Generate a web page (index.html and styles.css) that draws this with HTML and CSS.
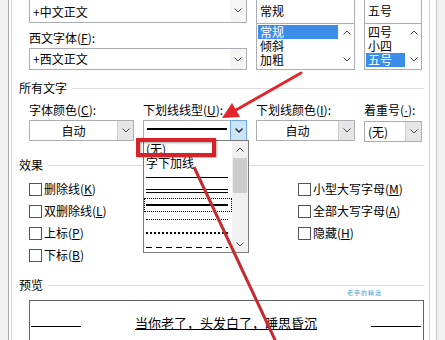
FILE: index.html
```html
<!DOCTYPE html>
<html lang="zh-CN">
<head>
    <meta charset="UTF-8">
    <meta name="viewport" content="width=device-width, initial-scale=1.0">
    <title>字体</title>
    <link rel="stylesheet" href="styles.css">
</head>
<body>
  <div class="window">
    <div class="pane">

      <div class="font-row">
        <div class="col w-font">
          <div class="combo combo-tall">
            <span class="combo-text">+中文正文</span>
            <span class="drop plain"><svg width="8" height="5" viewBox="0 0 8 5"><path d="M0.5 0.5 L4 4 L7.5 0.5" fill="none" stroke="#444"/></svg></span>
          </div>
          <div class="field-label top-label">西文字体(<u>F</u>):</div>
          <div class="combo">
            <span class="combo-text">+西文正文</span>
            <span class="drop plain"><svg width="8" height="5" viewBox="0 0 8 5"><path d="M0.5 0.5 L4 4 L7.5 0.5" fill="none" stroke="#444"/></svg></span>
          </div>
        </div>
        <div class="col w-style">
          <div class="textbox">常规</div>
          <div class="listbox">
            <ul class="items">
              <li class="sel">常规</li>
              <li>倾斜</li>
              <li>加粗</li>
            </ul>
            <div class="vscroll">
              <svg width="8" height="5" viewBox="0 0 8 5"><path d="M0.5 4.5 L4 1 L7.5 4.5" fill="none" stroke="#444"/></svg>
              <svg width="8" height="5" viewBox="0 0 8 5"><path d="M0.5 0.5 L4 4 L7.5 0.5" fill="none" stroke="#444"/></svg>
            </div>
          </div>
        </div>
        <div class="col w-size">
          <div class="textbox">五号</div>
          <div class="listbox">
            <ul class="items">
              <li>四号</li>
              <li>小四</li>
              <li class="sel">五号</li>
            </ul>
            <div class="vscroll">
              <svg width="8" height="5" viewBox="0 0 8 5"><path d="M0.5 4.5 L4 1 L7.5 4.5" fill="none" stroke="#444"/></svg>
              <svg width="8" height="5" viewBox="0 0 8 5"><path d="M0.5 0.5 L4 4 L7.5 0.5" fill="none" stroke="#444"/></svg>
            </div>
          </div>
        </div>
      </div>

      <div class="group-title">所有文字</div>
      <div class="attr-row">
        <div class="col w-color">
          <div class="field-label">字体颜色(<u>C</u>):</div>
          <div class="combo combo-sm">
            <span class="combo-text center">自动</span>
            <span class="drop"><svg width="8" height="5" viewBox="0 0 8 5"><path d="M0.5 0.5 L4 4 L7.5 0.5" fill="none" stroke="#444"/></svg></span>
          </div>
        </div>
        <div class="col w-uline">
          <div class="field-label">下划线线型(<u>U</u>):</div>
          <div class="combo combo-sm">
            <span class="combo-text"><span class="sample"></span></span>
            <span class="drop hot"><svg width="8" height="5" viewBox="0 0 8 5"><path d="M0.5 0.5 L4 4 L7.5 0.5" fill="none" stroke="#222" stroke-width="1.3"/></svg></span>
            <div class="ddlist">
              <div class="opts">
                <div class="opt">(无)</div>
                <div class="opt">字下加线</div>
                <div class="opt"><span class="ln ln-single"></span></div>
                <div class="opt"><span class="ln ln-double"></span></div>
                <div class="opt focus"><span class="ln ln-thick"></span></div>
                <div class="opt"><span class="ln ln-dot"></span></div>
                <div class="opt"><span class="ln ln-dot-heavy"></span></div>
                <div class="opt"><span class="ln ln-dash"></span></div>
              </div>
              <div class="ddscroll">
                <span class="sb-btn"><svg width="8" height="5" viewBox="0 0 8 5"><path d="M0.5 4.5 L4 1 L7.5 4.5" fill="none" stroke="#444"/></svg></span>
                <span class="thumb"></span>
                <span class="sb-btn bottom"><svg width="8" height="5" viewBox="0 0 8 5"><path d="M0.5 0.5 L4 4 L7.5 0.5" fill="none" stroke="#444"/></svg></span>
              </div>
            </div>
          </div>
        </div>
        <div class="col w-ucolor">
          <div class="field-label">下划线颜色(<u>I</u>):</div>
          <div class="combo combo-sm">
            <span class="combo-text center">自动</span>
            <span class="drop"><svg width="8" height="5" viewBox="0 0 8 5"><path d="M0.5 0.5 L4 4 L7.5 0.5" fill="none" stroke="#444"/></svg></span>
          </div>
        </div>
        <div class="col w-emph">
          <div class="field-label">着重号(<u class="latin">·</u>):</div>
          <div class="combo combo-sm">
            <span class="combo-text">(无)</span>
            <span class="drop"><svg width="8" height="5" viewBox="0 0 8 5"><path d="M0.5 0.5 L4 4 L7.5 0.5" fill="none" stroke="#444"/></svg></span>
          </div>
        </div>
      </div>

      <div class="group-title fx-title">效果</div>
      <div class="effects">
        <div class="fx-col left">
          <label class="check"><span class="box"></span>删除线(<u>K</u>)</label>
          <label class="check"><span class="box"></span>双删除线(<u>L</u>)</label>
          <label class="check"><span class="box"></span>上标(<u>P</u>)</label>
          <label class="check"><span class="box"></span>下标(<u>B</u>)</label>
        </div>
        <div class="fx-col">
          <label class="check"><span class="box"></span>小型大写字母(<u>M</u>)</label>
          <label class="check"><span class="box"></span>全部大写字母(<u>A</u>)</label>
          <label class="check"><span class="box"></span>隐藏(<u>H</u>)</label>
        </div>
      </div>

      <div class="group-title pv-title">预览<span class="watermark">老手的精选</span></div>
      <div class="preview">
        <span class="pv-line"></span>
        <span class="pv-text">当你老了，头发白了，睡思昏沉</span>
        <span class="pv-line"></span>
      </div>

    </div>
  </div>

  <!-- 标注：红框和箭头 -->
  <svg class="marks" width="445" height="340" viewBox="0 0 445 340">
    <defs>
      <filter id="sh" x="-20%" y="-20%" width="140%" height="140%">
        <feDropShadow dx="1" dy="1" stdDeviation="1" flood-color="#000" flood-opacity="0.35"/>
      </filter>
    </defs>
    <rect x="138" y="140" width="76" height="15" fill="none" stroke="#d8232a" stroke-width="4" filter="url(#sh)"/>
    <line x1="301" y1="73" x2="236" y2="110" stroke="#e3262b" stroke-width="3" stroke-linecap="round"/>
    <polygon points="222,118 240,117 232,103" fill="#e3262b"/>
    <line x1="194" y1="167" x2="276" y2="342" stroke="#c42a2e" stroke-width="3"/>
  </svg>
</body>
</html>
```

FILE: styles.css
```css
*{margin:0;padding:0;box-sizing:border-box;}
body{background:#f0f0f0;font:12px/16px "Noto Sans CJK SC","Noto Sans",sans-serif;color:#000;position:relative;height:340px;overflow:hidden;}
u{text-decoration:underline;}
.latin{font-family:"Liberation Sans",sans-serif;}
ul{list-style:none;}

/* window frame */
.window{margin:-3px 0 0 8px;width:429px;height:420px;background:#fff;border-left:1px solid #a9a9a9;border-right:1px solid #c6c6c6;padding:0 6px 0 2px;}
.pane{height:100%;border-left:1px solid #d6d6d6;border-right:1px solid #cfcfcf;}

.col{display:flex;flex-direction:column;}

/* top font row */
.font-row{display:flex;gap:9px;padding-left:17px;}
.w-font{width:218px;}
.w-style{width:99px;}
.w-size{width:58px;}

.combo{height:22px;border:1px solid #abadb3;display:flex;background:#fff;position:relative;}
.combo-tall{height:26px;}
.combo-sm{height:21px;}
.combo-text{flex:1;padding-left:3px;display:flex;align-items:center;white-space:nowrap;}
.combo-tall .combo-text{padding-top:4px;}
.combo-text.center{justify-content:center;padding-left:0;}
.drop{width:16px;display:flex;align-items:center;justify-content:center;background:#e6e6e6;border-left:1px solid #cfcfcf;}
.drop.plain{background:#f5f5f5;border-left:0;}
.drop.hot{background:#cce4f7;border:1px solid #6aa7e3;margin:-1px -1px -1px 0;width:17px;}

.field-label{white-space:nowrap;margin-bottom:2px;}
.top-label{margin-top:7px;}

.textbox{height:27px;border:1px solid #abadb3;padding:5px 0 0 3px;}
.listbox{height:46px;border:1px solid #abadb3;border-top:0;display:flex;}
.items{flex:1;padding:1px 1px 0;}
.items li{height:14px;line-height:14px;padding-left:2px;}
.items li.sel{background:#3b8de8;color:#fff;}
.vscroll{width:15px;display:flex;flex-direction:column;justify-content:space-between;align-items:center;padding:6px 0 7px;}

/* section titles */
.group-title{display:flex;align-items:center;padding:0 5px 0 7px;margin-top:10px;position:relative;}
.group-title::after{content:'';flex:1;border-top:1px solid #dcdcdc;margin-left:5px;}
.fx-title{margin-top:15px;}
.pv-title{margin-top:12px;}
.watermark{position:absolute;left:335px;top:13px;font-size:6px;line-height:6px;letter-spacing:1px;color:#4a9fd8;}

/* attribute row */
.attr-row{display:flex;gap:9px;padding-left:17px;margin-top:6px;}
.w-color{width:105px;}
.w-uline{width:104px;}
.w-ucolor{width:99px;}
.w-emph{width:58px;}
.sample{flex:1;height:2px;background:#000;margin:-3px 3px 0 0;}

/* open dropdown */
.ddlist{position:absolute;top:19px;left:-1px;width:106px;height:113px;border:1px solid #7a7a7a;background:#fff;display:flex;z-index:2;}
.opts{flex:1;padding-top:1px;}
.opt{height:14px;line-height:14px;display:flex;align-items:center;padding:0 2px 0 2px;white-space:nowrap;}
.opt.focus{outline:1px dotted #000;outline-offset:-1px;}
.ln{display:block;width:82px;}
.ln-single{border-top:1px solid #000;}
.ln-double{height:4px;border-top:1px solid #000;border-bottom:1px solid #000;}
.ln-thick{border-top:2px solid #000;}
.ln-dot{border-top:1px dotted #000;}
.ln-dot-heavy{border-top:2px dotted #000;}
.ln-dash{height:1px;background:repeating-linear-gradient(90deg,#000 0 6px,transparent 6px 10px);}
.ddscroll{width:16px;background:#f0f0f0;display:flex;flex-direction:column;}
.sb-btn{height:16px;display:flex;align-items:center;justify-content:center;}
.sb-btn.bottom{margin-top:auto;}
.thumb{height:35px;margin:1px 1px 0;background:#cdcdcd;}

/* effects */
.effects{display:flex;padding-left:17px;margin-top:6px;}
.fx-col{display:flex;flex-direction:column;gap:2px;}
.fx-col.left{width:269px;}
.check{display:flex;align-items:center;height:20px;white-space:nowrap;}
.box{width:13px;height:13px;border:1px solid #555;background:#fff;margin-right:2px;}

/* preview */
.preview{margin:7px 5px 0 17px;height:60px;border:1px solid #646464;display:flex;justify-content:space-between;align-items:flex-start;padding:0 2px 0 1px;}
.pv-line{width:50px;border-top:1px solid #000;margin-top:25px;}
.pv-text{margin-top:13px;font-size:13px;line-height:18px;text-decoration:underline;white-space:nowrap;}

.marks{position:absolute;left:0;top:0;pointer-events:none;z-index:5;}
```
